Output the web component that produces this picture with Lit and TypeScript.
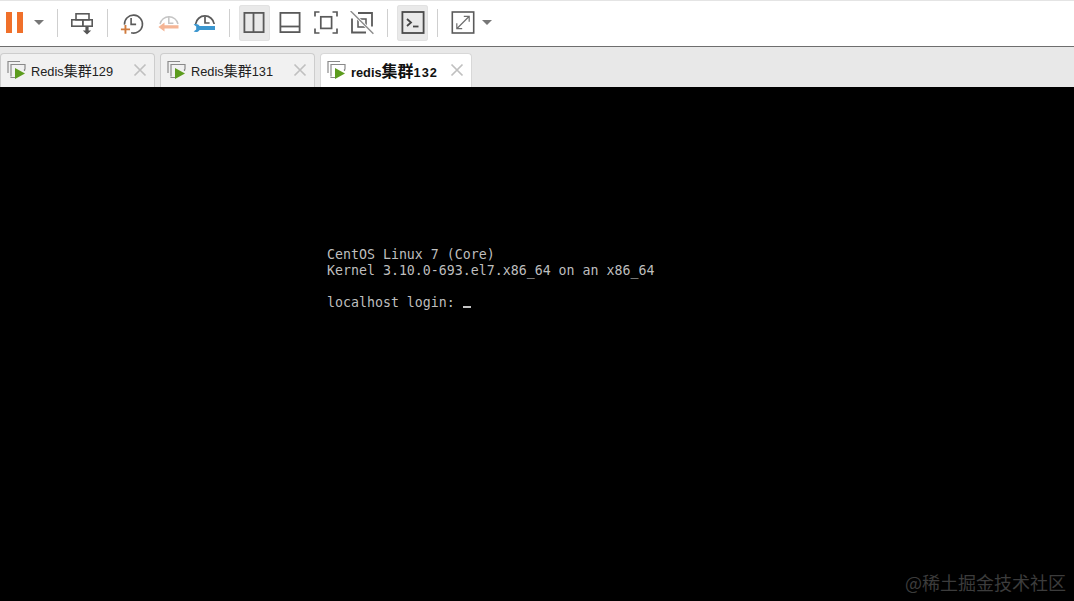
import { LitElement, html, css, svg } from "lit";
import { customElement } from "lit/decorators.js";

const G = "#5a5a5a";
const icons: Record<string, unknown> = {
  snapshot: svg`<g fill="none" stroke="${G}" stroke-width="1.6"><rect x="6" y="2.8" width="13" height="6"/><rect x="1.8" y="8.8" width="11" height="6.4"/><rect x="12.8" y="8.8" width="9.4" height="6.4"/></g><path d="M15.4 16v3.4h-2.6l4.2 4 4.2-4h-2.6V16z" fill="#555"/>`,
  take: svg`<g fill="none" stroke="${G}" stroke-width="1.6"><path d="M4.500 13.600a9 9 0 1 1 6.600 8.200"/><path d="M11.100 7v6.400h5" /></g><path d="M4.500 14v3.400H.9v1.800H4.500v3.600h1.900v-3.600h3.600v-1.800H6.400V14z" fill="#cf7a3c"/>`,
  revert: svg`<g fill="none" stroke="#c4c4c4" stroke-width="1.500"><path d="M4 13a9.200 9.200 0 0 1 18 0"/><path d="M12.800 5.600v6.600h4.600"/></g><path d="M8.500 11.400 2.400 16l6.100 4.400v-2.800h14v-3.400h-14z" fill="#f5b595"/>`,
  manage: svg`<g fill="none" stroke="${G}" stroke-width="1.700"><path d="M3.600 13a9.400 9.400 0 0 1 18.600 0"/><path d="M13 5.600v6.400h4.600"/></g><path d="M1.600 13.400c2.800-1 5-.3 6 1.600h15.400v4H7.600c-1 1.900-3.200 2.600-6 1.600l2.600-2v-3.200z" fill="#3a96cf"/>`,
  side: svg`<g fill="none" stroke="${G}" stroke-width="1.800"><rect x="2.400" y="1.900" width="19.200" height="19.200"/><path d="M11.500 2v19"/></g>`,
  bottom: svg`<g fill="none" stroke="${G}" stroke-width="1.800"><rect x="2.400" y="1.900" width="19.200" height="19.200"/><path d="M2.400 15.500h19.200"/></g>`,
  full: svg`<g fill="none" stroke="${G}" stroke-width="1.700"><rect x="6.800" y="5.800" width="10.800" height="11.600"/><path d="M5.500 1H1v4.500M18.500 1H23v4.500M5.500 22H1v-4.500M18.500 22H23v-4.500"/></g>`,
  nofull: svg`<g fill="none" stroke="${G}" stroke-width="1.800"><path d="M8 2H22V15.500M2 7.500V21.500H16"/><path d="M8 8h8v8H8z" stroke-width="1.500"/></g><path d="M.6 0 23.400 22.800" stroke="#fff" stroke-width="3"/><path d="M.6 0 23.400 22.800" stroke="#8c8c8c" stroke-width="1.400"/>`,
  term: svg`<rect x="1.400" y="1" width="21.200" height="21" fill="#e9e9e9" stroke="#4a4a4a" stroke-width="1.800"/><path d="M6 8l4 3.500-4 3.500" fill="none" stroke="#444" stroke-width="1.800"/><path d="M12 15.500h5.500" stroke="#444" stroke-width="1.800"/>`,
  stretch: svg`<rect x="1.300" y="1" width="21.400" height="21" fill="none" stroke="${G}" stroke-width="1.600"/><path d="M6 17.500 18 5.500M12.800 5.300H18.200V10.700M5.800 12.300v5.400h5.400" fill="none" stroke="#6e6e6e" stroke-width="1.200"/>`,
};

const icon = (n: string) => html`<svg width="24" height="24" viewBox="0 0 24 24">${icons[n]}</svg>`;
const caret = html`<span class="caret"></span>`;
const sep = html`<span class="sep"></span>`;

const tabIcon = html`<svg class="vm" width="20" height="20" viewBox="0 0 20 20"><path d="M1 13V1.500h12M4 16V4.500h14v5" fill="none" stroke="#8a8a8a" stroke-width="1.200"/><path d="M4 16.500v1h5M17.500 9v2" fill="none" stroke="#8a8a8a" stroke-width="1.200"/><path d="M8 8l10 5.600L8 19z" fill="#5c9c1e"/></svg>`;

@customElement("app-root")
export class AppRoot extends LitElement {
  static styles = css`
    :host { display: flex; flex-direction: column; width: 1074px; height: 601px; overflow: hidden; background: #000; position: relative; }
    .toolbar { box-sizing: border-box; background: #fff; border-top: 1px solid #e4e4e4; border-bottom: 1px solid #6e6e6e; height: 47px; display: flex; align-items: center; padding-bottom: 1px; }
    .btn { width: 31px; height: 36px; margin: 0 2.5px; display: flex; align-items: center; justify-content: center; border-radius: 3px; flex: none; }
    .btn.on { background: #e9e9e9; box-shadow: 0 0 0 1px #e2e2e2 inset; }
    .pause { width: 28px; height: 36px; display: flex; align-items: center; justify-content: center; gap: 5px; flex: none; margin-top: -1px; }
    .pause i { width: 6px; height: 21px; background: #f0702a; display: block; }
    .caretbox { width: 22px; display: flex; justify-content: center; flex: none; margin-top: -1px; }
    .caretbox.end { width: 12px; }
    .caret { display: block; width: 0; height: 0; border-left: 5px solid transparent; border-right: 5px solid transparent; border-top: 5px solid #777; }
    .sep { width: 1px; height: 28px; background: #cfcfcf; margin: 0 6.5px; flex: none; }
    .g1 { margin-left: 2.5px; }
    .g2 { margin-left: 3px; }
    .tabs { height: 40px; background: #e8e8e8; display: flex; align-items: flex-end; gap: 5px; box-sizing: border-box; flex: none; }
    .tab { height: 34px; width: 155px; box-sizing: border-box; background: #f1f1f1; border: 1px solid #cdcdcd; border-bottom: none; border-radius: 4px 4px 0 0; display: flex; align-items: center; padding: 0 6px 2px 6px; font: 12.8px "Liberation Sans", "Noto Sans CJK SC", sans-serif; color: #222; }
    .tab.cur { width: 152px; background: #fff; font-weight: 700; color: #111; border-color: #d8d8d8; }
    .vm { flex: none; margin-right: 4px; margin-top: 1px; }
    .name { flex: 1; white-space: nowrap; }
    .cjk { font-size: 14px; }
    .cur .cjk { font-size: 16px; }
    .cur .num { letter-spacing: 1px; }
    .x { flex: none; margin-right: 1px; margin-top: 1px; }
    .screen { flex: 1; background: #000; padding: 160px 0 0 327px; }
    .screen pre { margin: 0; font: 13.28px/16px "DejaVu Sans Mono", monospace; color: #bebebe; }
    .cursor { display: inline-block; width: 8px; height: 2px; background: #c4c4c4; vertical-align: -1px; }
    .mark { position: absolute; right: 8px; bottom: 8px; font: 18px/22px "Noto Sans CJK SC", sans-serif; color: #3c3c3c; white-space: nowrap; }
  `;

  private tab(lead: string, cjk: string, num: string, cur = false) {
    return html`<div class="tab ${cur ? "cur" : ""}">
      ${tabIcon}<span class="name">${lead}<span class="cjk">${cjk}</span><span class="num">${num}</span></span>
      <svg class="x" width="14" height="14" viewBox="0 0 14 14"><path d="M1.500 1.500l11 11M12.500 1.500l-11 11" stroke="#c0c0c0" stroke-width="1.700"/></svg>
    </div>`;
  }

  render() {
    return html`
      <div class="toolbar">
        <div class="pause"><i></i><i></i></div>
        <div class="caretbox">${caret}</div>
        ${sep}
        <div class="btn">${icon("snapshot")}</div>
        ${sep}
        <div class="btn">${icon("take")}</div>
        <div class="btn g1">${icon("revert")}</div>
        <div class="btn">${icon("manage")}</div>
        ${sep}
        <div class="btn on">${icon("side")}</div>
        <div class="btn">${icon("bottom")}</div>
        <div class="btn">${icon("full")}</div>
        <div class="btn">${icon("nofull")}</div>
        ${sep}
        <div class="btn on g2">${icon("term")}</div>
        ${sep}
        <div class="btn">${icon("stretch")}</div>
        <div class="caretbox end">${caret}</div>
      </div>
      <div class="tabs">
        ${this.tab("Redis", "集群", "129")}
        ${this.tab("Redis", "集群", "131")}
        ${this.tab("redis", "集群", "132", true)}
      </div>
      <div class="screen"><pre>CentOS Linux 7 (Core)
Kernel 3.10.0-693.el7.x86_64 on an x86_64

localhost login: <span class="cursor"></span></pre></div>
      <div class="mark">@稀土掘金技术社区</div>
    `;
  }
}
